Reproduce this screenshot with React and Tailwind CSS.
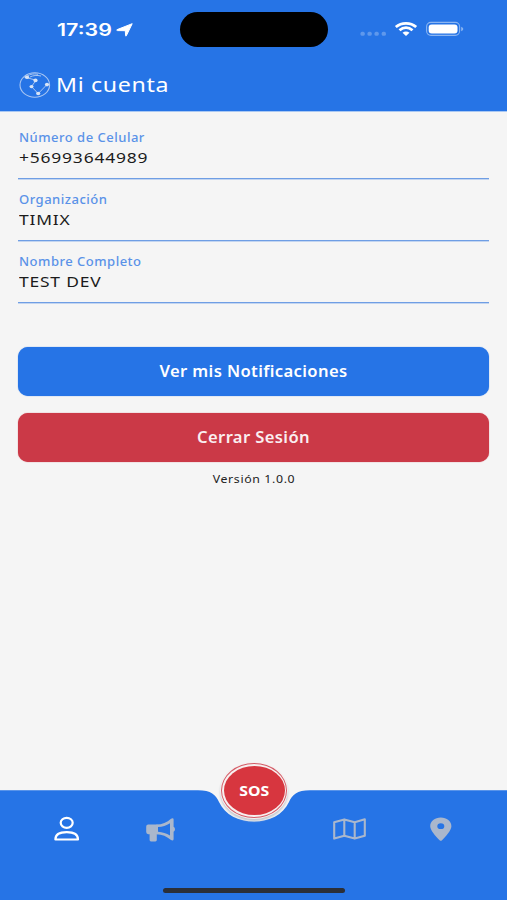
const fields = [
  { label: 'Número de Celular', value: '+56993644989' },
  { label: 'Organización', value: 'TIMIX' },
  { label: 'Nombre Completo', value: 'TEST DEV' },
];

export default function App() {
  return (
    <div className="w-[507px] h-[900px] bg-[#f5f5f5] flex flex-col overflow-hidden font-['Noto_Sans',sans-serif]">
      <Header />

      <main className="flex-1 px-[18px] pt-[5px]">
        {fields.map((field) => (
          <Field key={field.label} label={field.label} value={field.value} />
        ))}

        {/* Actions */}
        <div className="mt-[44px] flex flex-col gap-[17.5px]">
          <button className="h-[48.5px] rounded-[10px] bg-[#2674e6] shadow-[0_0_1px_#2674e6] text-white">
            <span className="block scale-x-[1.07] text-[15.5px] font-semibold tracking-[0.35px]">Ver mis Notificaciones</span>
          </button>
          <button className="h-[48.5px] rounded-[10px] bg-[#cb3947] shadow-[0_0_1px_#cb3947] text-[#faeef0]">
            <span className="block scale-x-[1.07] text-[15.5px] font-semibold tracking-[0.35px]">Cerrar Sesión</span>
          </button>
        </div>
        <p className="mt-[8px] scale-x-[1.07] pl-[1px] text-center text-[11.5px] leading-[18px] tracking-[0.6px] text-[#222]">Versión 1.0.0</p>
      </main>

      <TabBar />
    </div>
  );
}

function Header() {
  return (
    <header className="h-[112px] bg-[#2674e6] border-b border-[#a9c8f3] text-white">
      <div className="h-[59px] grid grid-cols-[180px_148px_179px] items-center">
        <div className="flex items-center pl-[57px]">
          <span className="w-[59px] origin-left scale-x-[1.26] whitespace-nowrap font-['Inter',sans-serif] text-[17px] leading-5 font-semibold">17:39</span>
          <svg className="h-[14px] w-[17px]" viewBox="0 0 17 14" fill="currentColor" stroke="currentColor" strokeWidth="1" strokeLinejoin="round">
            <path d="M16.2 0.7L10.3 12.8Q9.8 13.6 9.6 12.6L9.3 7.7L1.5 7.6Q0 7.3 1.2 6.6Z" />
          </svg>
        </div>
        <div className="h-[35px] rounded-full bg-black" />
        <StatusIcons />
      </div>
      <div className="flex h-[51px] items-center pl-[19px]">
        <Logo />
        <h1 className="mb-[2px] ml-[5px] origin-left scale-x-[1.13] whitespace-nowrap text-[20.5px] leading-7 tracking-[0.6px]">Mi cuenta</h1>
      </div>
    </header>
  );
}

function StatusIcons() {
  return (
    <svg className="h-[20px] w-[179px]" viewBox="328 19.8 179 20" fill="none">
      <g fill="#5f98ec">
        <rect x="360.5" y="31.5" width="4.2" height="4" rx="1.5" />
        <rect x="367.5" y="31.5" width="4.2" height="4" rx="1.5" />
        <rect x="374.5" y="31.5" width="4.2" height="4" rx="1.5" />
        <rect x="381.7" y="31.5" width="4.2" height="4" rx="1.5" />
      </g>
      <path d="M395.8 26.8C401.5 21.9 410.5 21.9 416.2 26.8M399.5 30.1C403.4 26.7 408.6 26.7 412.5 30.1" stroke="#fff" strokeWidth="2.8" />
      <path d="M402.5 32.6C404.6 30.8 407.4 30.8 409.5 32.6L406 35.8Z" fill="#fff" />
      <rect x="426.6" y="22.2" width="33" height="13" rx="4.3" stroke="#8bb5f1" strokeWidth="1.1" />
      <rect x="428.7" y="24.2" width="28.8" height="9.2" rx="3" fill="#fff" />
      <path d="M461.2 26.6Q463.3 27.4 463.3 28.8Q463.3 30.2 461.2 31Z" fill="#8bb5f1" />
    </svg>
  );
}

function Logo() {
  return (
    <svg className="h-[28px] w-[32px]" viewBox="0 0 32 28" fill="none">
      <ellipse cx="15.8" cy="14" rx="14.8" ry="12.2" stroke="#a9c6f2" strokeWidth="1.1" />
      <path d="M7 6.5L17 9.2L12.5 15.6L19.2 22.6L28 13.5M7 6.5C9 3.6 14 2.2 19 3.3M11 6C14 4.4 18 4 22 5" stroke="#a9c6f2" strokeWidth="1" />
      <g fill="#d9e4f5">
        <ellipse cx="8" cy="6.3" rx="2.2" ry="1.8" />
        <ellipse cx="16.5" cy="9.4" rx="2.1" ry="1.8" />
        <ellipse cx="12.5" cy="15.6" rx="2" ry="1.7" />
        <ellipse cx="19.2" cy="22.5" rx="2.1" ry="1.8" />
        <ellipse cx="28" cy="13.6" rx="2.1" ry="1.8" />
      </g>
    </svg>
  );
}

function Field({ label, value }) {
  return (
    <div className="h-[62px] border-b border-[#6f9ee4] pt-[11px] pl-[1px] shadow-[0_1px_0_#c3d5f0]">
      <div className="w-fit origin-left scale-x-[1.07] text-[12.2px] leading-[19px] font-medium tracking-[0.45px] text-[#5a92e8]">{label}</div>
      <div className="-mt-px w-fit origin-left scale-x-[1.14] text-[15.3px] leading-[22px] tracking-[0.7px] text-[#1b1b1b]">{value}</div>
    </div>
  );
}

function TabBar() {
  return (
    <nav className="relative h-[110px]">
      {/* Bar shape with the SOS notch */}
      <svg className="absolute inset-0 h-full w-full" viewBox="0 0 507 110">
        <path d="M0 0.3H198C211 0.3 216 5 219 12C225 25 239 31.5 254 31.5C269 31.5 283 25 289 12C292 5 297 0.3 310 0.3H507V110H0Z" fill="#2674e6" />
      </svg>

      <div className="relative grid h-[78px] grid-cols-[133px_74px_94px_97px_86px] items-center text-[#aab7cc]">
        <PersonIcon />
        <MegaphoneIcon />
        <span />
        <MapIcon />
        <PinIcon />
      </div>

      {/* SOS button */}
      <button className="absolute top-[-28px] left-[220px] flex h-[57px] w-[68px] items-center justify-center rounded-[50%] bg-[#f7f0f0] shadow-[0_2px_2px_#c4c9d0]">
        <span className="absolute inset-[1px] rounded-[50%] border-[1.3px] border-[#d35c67]" />
        <span className="flex h-[49px] w-[61px] items-center justify-center rounded-[50%] bg-[#d7363f]">
          <span className="scale-x-[1.13] text-[14px] leading-none font-bold text-white">SOS</span>
        </span>
      </button>

      {/* Home indicator */}
      <div className="absolute bottom-[7.5px] left-[163px] h-[5px] w-[182px] rounded-full bg-[#2b2f38]" />
    </nav>
  );
}

function PersonIcon() {
  return (
    <svg className="ml-[53px] h-[26px] w-[28px]" viewBox="0 0 28 26" fill="none" stroke="#fff" strokeWidth="2.2">
      <ellipse cx="13.7" cy="6.8" rx="6" ry="5" />
      <path d="M2.4 23.5C2.4 18.5 6.5 16.2 13.7 16.2S25 18.5 25 23.5Z" strokeLinejoin="round" />
    </svg>
  );
}

function MegaphoneIcon() {
  return (
    <svg className="mt-[1px] ml-[13px] h-[24px] w-[29px]" viewBox="0 0 29 24" fill="currentColor">
      <path d="M2.2 6.6H11.5V16.2H10.8V22Q10.8 23.4 9.4 23.4H5Q3.6 23.4 3.6 22V16.2H2.2Q0.2 16 0.2 14V8.6Q0.2 6.8 2.2 6.6Z" />
      <path fillRule="evenodd" d="M10.5 6.6C16 6.6 21 4.4 25 0.8Q27.6 -0.4 27.6 1.6V8.8Q29 9.6 29 11.3Q29 13 27.6 13.8V21.2Q27.2 23.2 25 22C21 18.4 16 16.2 10.5 16.2ZM12 9V13.8C16.5 14.1 20.4 15.3 24 17.6V5.2C20.4 7.5 16.5 8.7 12 9Z" />
    </svg>
  );
}

function MapIcon() {
  return (
    <svg className="ml-[32px] h-[22px] w-[33px]" viewBox="0 0 33 22" fill="none" stroke="currentColor" strokeWidth="2.1" strokeLinejoin="round">
      <path d="M1.2 4.2L11.3 1.4L21.7 4.2L31.8 1.3V17.8L21.7 20.6L11.3 17.8L1.2 20.6ZM11.3 1.4V17.8M21.7 4.2V20.6" />
    </svg>
  );
}

function PinIcon() {
  return (
    <svg className="ml-[32px] h-[24px] w-[22px]" viewBox="0 0 22 24" fill="currentColor">
      <path fillRule="evenodd" d="M10.8 0.6C16.8 0.6 21.4 4.3 21.4 9.2C21.4 13.2 15.8 19.5 12 23.2Q10.8 24.3 9.6 23.2C5.8 19.5 0.2 13.2 0.2 9.2C0.2 4.3 4.8 0.6 10.8 0.6ZM10.8 6.3A3.5 2.9 0 1 0 10.8 12.1A3.5 2.9 0 1 0 10.8 6.3Z" />
    </svg>
  );
}
